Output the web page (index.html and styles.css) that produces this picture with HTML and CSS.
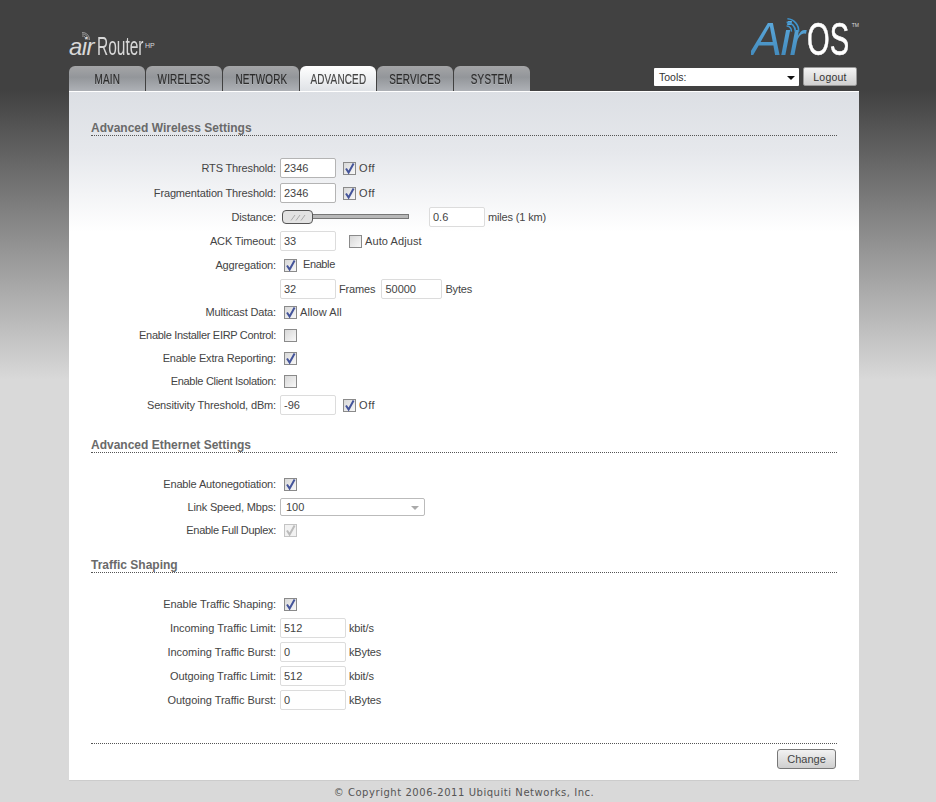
FILE: index.html
```html
<!DOCTYPE html>
<html lang="en">
<head>
<meta charset="utf-8">
<title>airRouter HP - Advanced</title>
<link rel="stylesheet" href="styles.css">
</head>
<body>
<svg class="defs" width="0" height="0" aria-hidden="true">
  <symbol id="tick" viewBox="0 0 13 13"><path d="M3 6.500 L5.600 10.600 L10.600 1.600" fill="none" stroke-width="2"/></symbol>
</svg>
<div class="page">
  <header class="top">
    <div class="brand-row">
      <div class="product">
        <svg class="product-wifi" width="9" height="9" viewBox="0 0 9 9"><path d="M1 4a3.500 3.500 0 0 1 4 4M1 2a5.500 5.500 0 0 1 6 6M1 .5a7 7 0 0 1 7.500 7.500" fill="none" stroke="#bbb" stroke-width=".7"/></svg>
        <span class="air">air</span><span class="router"><span>Router</span></span><span class="hp">HP</span>
      </div>
      <div class="airos">
        <svg class="airos-wifi" width="16" height="16" viewBox="0 0 20 20"><path d="M2 10a6 6 0 0 1 6 7M2 5.500a11 11 0 0 1 11 11.500M3 1a15 15 0 0 1 14 16" fill="none" stroke="#3f93cc" stroke-width="2"/></svg>
        <span class="airos-air">Air</span><span class="airos-os"><span>OS</span></span><span class="tm">TM</span>
      </div>
    </div>
    <div class="nav-row">
      <nav class="tabs">
        <a class="tab"><span>MAIN</span></a>
        <a class="tab"><span>WIRELESS</span></a>
        <a class="tab"><span>NETWORK</span></a>
        <a class="tab active"><span>ADVANCED</span></a>
        <a class="tab"><span>SERVICES</span></a>
        <a class="tab"><span>SYSTEM</span></a>
      </nav>
      <div class="tools">
        <div class="tools-select"><span>Tools:</span><i class="arrow"></i></div>
        <button class="logout">Logout</button>
      </div>
    </div>
  </header>

  <main class="panel">
    <h2 class="heading first">Advanced Wireless Settings</h2>
    <div class="form">
      <div class="row gap1"><label>RTS Threshold:</label><div class="ctl"><span class="in dark">2346</span><span class="cb on m7"><svg><use href="#tick"/></svg></span><span class="opt spaced">Off</span></div></div>
      <div class="row"><label>Fragmentation Threshold:</label><div class="ctl"><span class="in dark">2346</span><span class="cb on m7"><svg><use href="#tick"/></svg></span><span class="opt spaced">Off</span></div></div>
      <div class="row"><label>Distance:</label><div class="ctl"><div class="slider"><span class="track"></span><span class="handle"><svg width="18" height="7" viewBox="0 0 18 7"><path d="M2 6.500 6 1M7 6.500 11 1M12 6.500 16 1" stroke="#aaa" fill="none"/></svg></span></div><span class="in dist">0.6</span><span class="unit">miles (1 km)</span></div></div>
      <div class="row"><label>ACK Timeout:</label><div class="ctl"><span class="in">33</span><span class="cb m13"></span><span class="opt auto">Auto Adjust</span></div></div>
      <div class="row"><label>Aggregation:</label><div class="ctl ind"><span class="cb on"><svg><use href="#tick"/></svg></span><span class="opt enable">Enable</span></div></div>
      <div class="row"><label></label><div class="ctl"><span class="in">32</span><span class="unit">Frames</span><span class="in bytes">50000</span><span class="unit">Bytes</span></div></div>
      <div class="row short"><label>Multicast Data:</label><div class="ctl ind"><span class="cb on"><svg><use href="#tick"/></svg></span><span class="opt allow">Allow All</span></div></div>
      <div class="row short"><label class="tight">Enable Installer EIRP Control:</label><div class="ctl ind"><span class="cb"></span></div></div>
      <div class="row short"><label>Enable Extra Reporting:</label><div class="ctl ind"><span class="cb on"><svg><use href="#tick"/></svg></span></div></div>
      <div class="row short"><label class="tight">Enable Client Isolation:</label><div class="ctl ind"><span class="cb"></span></div></div>
      <div class="row"><label>Sensitivity Threshold, dBm:</label><div class="ctl"><span class="in">-96</span><span class="cb on m7"><svg><use href="#tick"/></svg></span><span class="opt spaced">Off</span></div></div>
    </div>

    <h2 class="heading second">Advanced Ethernet Settings</h2>
    <div class="form">
      <div class="row short"><label>Enable Autonegotiation:</label><div class="ctl ind"><span class="cb on"><svg><use href="#tick"/></svg></span></div></div>
      <div class="row short"><label>Link Speed, Mbps:</label><div class="ctl"><div class="speed"><span>100</span><i class="speed-arrow"></i></div></div></div>
      <div class="row short"><label class="tight">Enable Full Duplex:</label><div class="ctl ind"><span class="cb on off"><svg><use href="#tick"/></svg></span></div></div>
    </div>

    <h2 class="heading third">Traffic Shaping</h2>
    <div class="form traffic">
      <div class="row short"><label>Enable Traffic Shaping:</label><div class="ctl ind"><span class="cb on"><svg><use href="#tick"/></svg></span></div></div>
      <div class="row"><label>Incoming Traffic Limit:</label><div class="ctl"><span class="in wide">512</span><span class="unit">kbit/s</span></div></div>
      <div class="row"><label>Incoming Traffic Burst:</label><div class="ctl"><span class="in wide">0</span><span class="unit">kBytes</span></div></div>
      <div class="row"><label>Outgoing Traffic Limit:</label><div class="ctl"><span class="in wide">512</span><span class="unit">kbit/s</span></div></div>
      <div class="row"><label>Outgoing Traffic Burst:</label><div class="ctl"><span class="in wide">0</span><span class="unit">kBytes</span></div></div>
    </div>

    <div class="actions"><button class="change">Change</button></div>
  </main>

  <footer class="copyright">© Copyright 2006-2011 Ubiquiti Networks, Inc.</footer>
</div>
</body>
</html>
```
FILE: styles.css
```css
* { box-sizing: border-box; }
html, body { margin: 0; height: 802px; overflow: hidden; }
body {
  background: linear-gradient(to bottom, #414141 0, #414141 90px, #d9d9d9 380px, #d9d9d9 100%);
  font: 11px/14px "Liberation Sans", Arial, sans-serif;
  letter-spacing: -.15px;
  color: #444;
}
.defs { position: absolute; }
.page { width: 790px; margin-left: 69px; }

/* header */
.top { height: 91px; }
.brand-row { height: 66px; display: flex; justify-content: space-between; align-items: flex-end; }
.product { position: relative; display: flex; align-items: baseline; color: #d8d8d8; height: 30px; margin-bottom: 5px; letter-spacing: 0; }
.product-wifi { position: absolute; left: 12px; top: 1px; }
.air { font: italic 24px/30px "Liberation Sans", sans-serif; letter-spacing: -.6px; width: 27px; }
.router { display: block; width: 46px; margin-left: 1px; font: 25px/30px "Liberation Sans", sans-serif; }
.router span { display: inline-block; transform: scaleX(.62); transform-origin: left center; }
.hp { font: 7px/10px "Liberation Sans", sans-serif; margin-left: 2px; position: relative; top: -7px; }
.airos { position: relative; display: flex; align-items: baseline; height: 46px; margin-bottom: 4px; letter-spacing: 0; }
.airos-wifi { position: absolute; left: 34px; top: 2px; }
.airos-air { width: 56px; font: italic 47px/46px "Liberation Sans", sans-serif; letter-spacing: -1.500px; color: transparent; background: linear-gradient(to bottom, #5fade0, #3f86b8); -webkit-background-clip: text; background-clip: text; }
.airos-os { display: block; width: 45px; font: 47px/46px "Liberation Sans", sans-serif; color: #fff; -webkit-text-stroke: .6px #fff; }
.airos-os span { display: inline-block; transform: scaleX(.62); transform-origin: left center; }
.tm { font: 5px/6px "Liberation Sans", sans-serif; color: #ddd; position: relative; top: -28px; }

.nav-row { height: 25px; display: flex; justify-content: space-between; }
.tabs { display: flex; gap: 1px; }
.tab {
  display: flex; justify-content: center;
  width: 76px; height: 25px; border-radius: 6px 6px 0 0;
  background: linear-gradient(to bottom, #a4a5a7 0, #93969a 45%, #aeb1b6 100%);
  font: 15px/26px "Liberation Sans", sans-serif;
  color: #2b2b2b; letter-spacing: .3px;
}
.tab span { display: block; transform: scaleX(.66); white-space: nowrap; text-shadow: 0 1px 0 rgba(255,255,255,.2); -webkit-text-stroke: .2px #2b2b2b; }
.tab.active { background: linear-gradient(to bottom, #fff, #dfe2e6); color: #444; }
.tab.active span { -webkit-text-stroke: .2px #444; }
.tools { display: flex; gap: 4px; padding: 1px 2px 0 0; height: 21px; letter-spacing: 0; }
.tools-select { position: relative; width: 145px; height: 18px; margin-top: 1px; background: #fff; color: #333; font-size: 10.500px; line-height: 18px; padding-left: 5px; border-radius: 1px; }
.arrow { position: absolute; right: 4px; top: 8px; border: 4px solid transparent; border-top-color: #111; border-bottom: 0; }
.logout { width: 54px; height: 19px; padding: 0; border: 1px solid #999; border-radius: 2px; background: linear-gradient(to bottom, #f4f4f4, #d0d0d0); color: #333; font: 10.500px/16px "Liberation Sans", sans-serif; letter-spacing: .2px; }

/* panel */
.panel { height: 690px; padding: 28px 22px 0; background: linear-gradient(to bottom, #dcdfe4 0, #e6e8ec 60px, #ffffff 140px); border-top: 1px solid #fff; border-bottom: 1px solid #ccc; }
.heading { margin: 0; height: 17px; font: bold 12px/19px "Liberation Sans", sans-serif; letter-spacing: 0; color: #6a6a6a; border-bottom: 1px dotted #555; }
.heading.first { margin-top: -1px; }
.heading.second { margin-top: 19px; }
.heading.third { margin-top: 14px; }
.form { margin-top: 20px; }
.row { height: 24px; display: flex; align-items: center; }
.row.short { height: 23px; }
.row.short label { padding-bottom: 2px; }
.row.gap1 { margin-bottom: 1px; }
.row label { width: 185px; text-align: right; flex: none; }
.row label.tight { letter-spacing: -.3px; }
.traffic .row label { letter-spacing: -.03px; }
.ctl { margin-left: 4px; display: flex; align-items: center; }
.ctl.ind { margin-left: 8px; }
.in { display: block; width: 56px; height: 20px; border: 1px solid #dcdcdc; border-radius: 2px; background: #fff; padding-left: 3px; line-height: 18px; color: #444; flex: none; letter-spacing: 0; }
.in.dark { border-color: #b4b4b4; }
.in.wide { width: 66px; }
.in.dist { margin-left: 20px; }
.in.bytes { width: 61px; margin-left: 6px; }
.unit { margin-left: 3px; }
.cb { display: block; position: relative; width: 13px; height: 13px; border: 1px solid #8a8a8a; background: linear-gradient(135deg, #d8d8d8, #f8f8f8); flex: none; }
.cb svg { position: absolute; left: -1px; top: -1px; width: 13px; height: 13px; stroke: #44549a; }
.cb.off { border-color: #c4c4c4; background: #f2f2f2; }
.cb.off svg { stroke: #bbb; }
.cb.m7 { margin-left: 7px; }
.cb.m13 { margin-left: 13px; }
.opt { margin-left: 3px; }
.opt.auto { letter-spacing: .1px; }
.opt.spaced { letter-spacing: .6px; }
.opt.allow { letter-spacing: .1px; padding-bottom: 2px; }
.opt.enable { margin-left: 6px; letter-spacing: -.4px; padding-bottom: 2px; }

.slider { position: relative; width: 129px; height: 14px; }
.track { position: absolute; left: 3px; right: 0; top: 4px; height: 5px; background: #b8b8b8; border: 1px solid #777; }
.handle { position: absolute; left: 2px; top: 0; width: 31px; height: 14px; border: 1px solid #555; border-radius: 4px; background: #e2e2e2; display: flex; align-items: center; justify-content: center; }

.speed { position: relative; width: 145px; height: 18px; margin-bottom: 1px; border: 1px solid #bbb; border-radius: 2px; background: #fff; padding-left: 5px; line-height: 16px; letter-spacing: 0; }
.speed-arrow { position: absolute; right: 5px; top: 7px; border: 4px solid transparent; border-top-color: #aaa; border-bottom: 0; }

.actions { margin-top: 31px; border-top: 1px dotted #555; padding: 5px 1px 0 0; display: flex; justify-content: flex-end; }
.change { width: 59px; height: 20px; padding: 0; border: 1px solid #777; border-radius: 3px; background: linear-gradient(to bottom, #f2f2f2, #cfcfcf); color: #444; font: 11px/18px "Liberation Sans", sans-serif; }

.copyright { height: 21px; text-align: center; font: 10px/23px "DejaVu Sans", Verdana, sans-serif; color: #555; letter-spacing: .55px; }
```
